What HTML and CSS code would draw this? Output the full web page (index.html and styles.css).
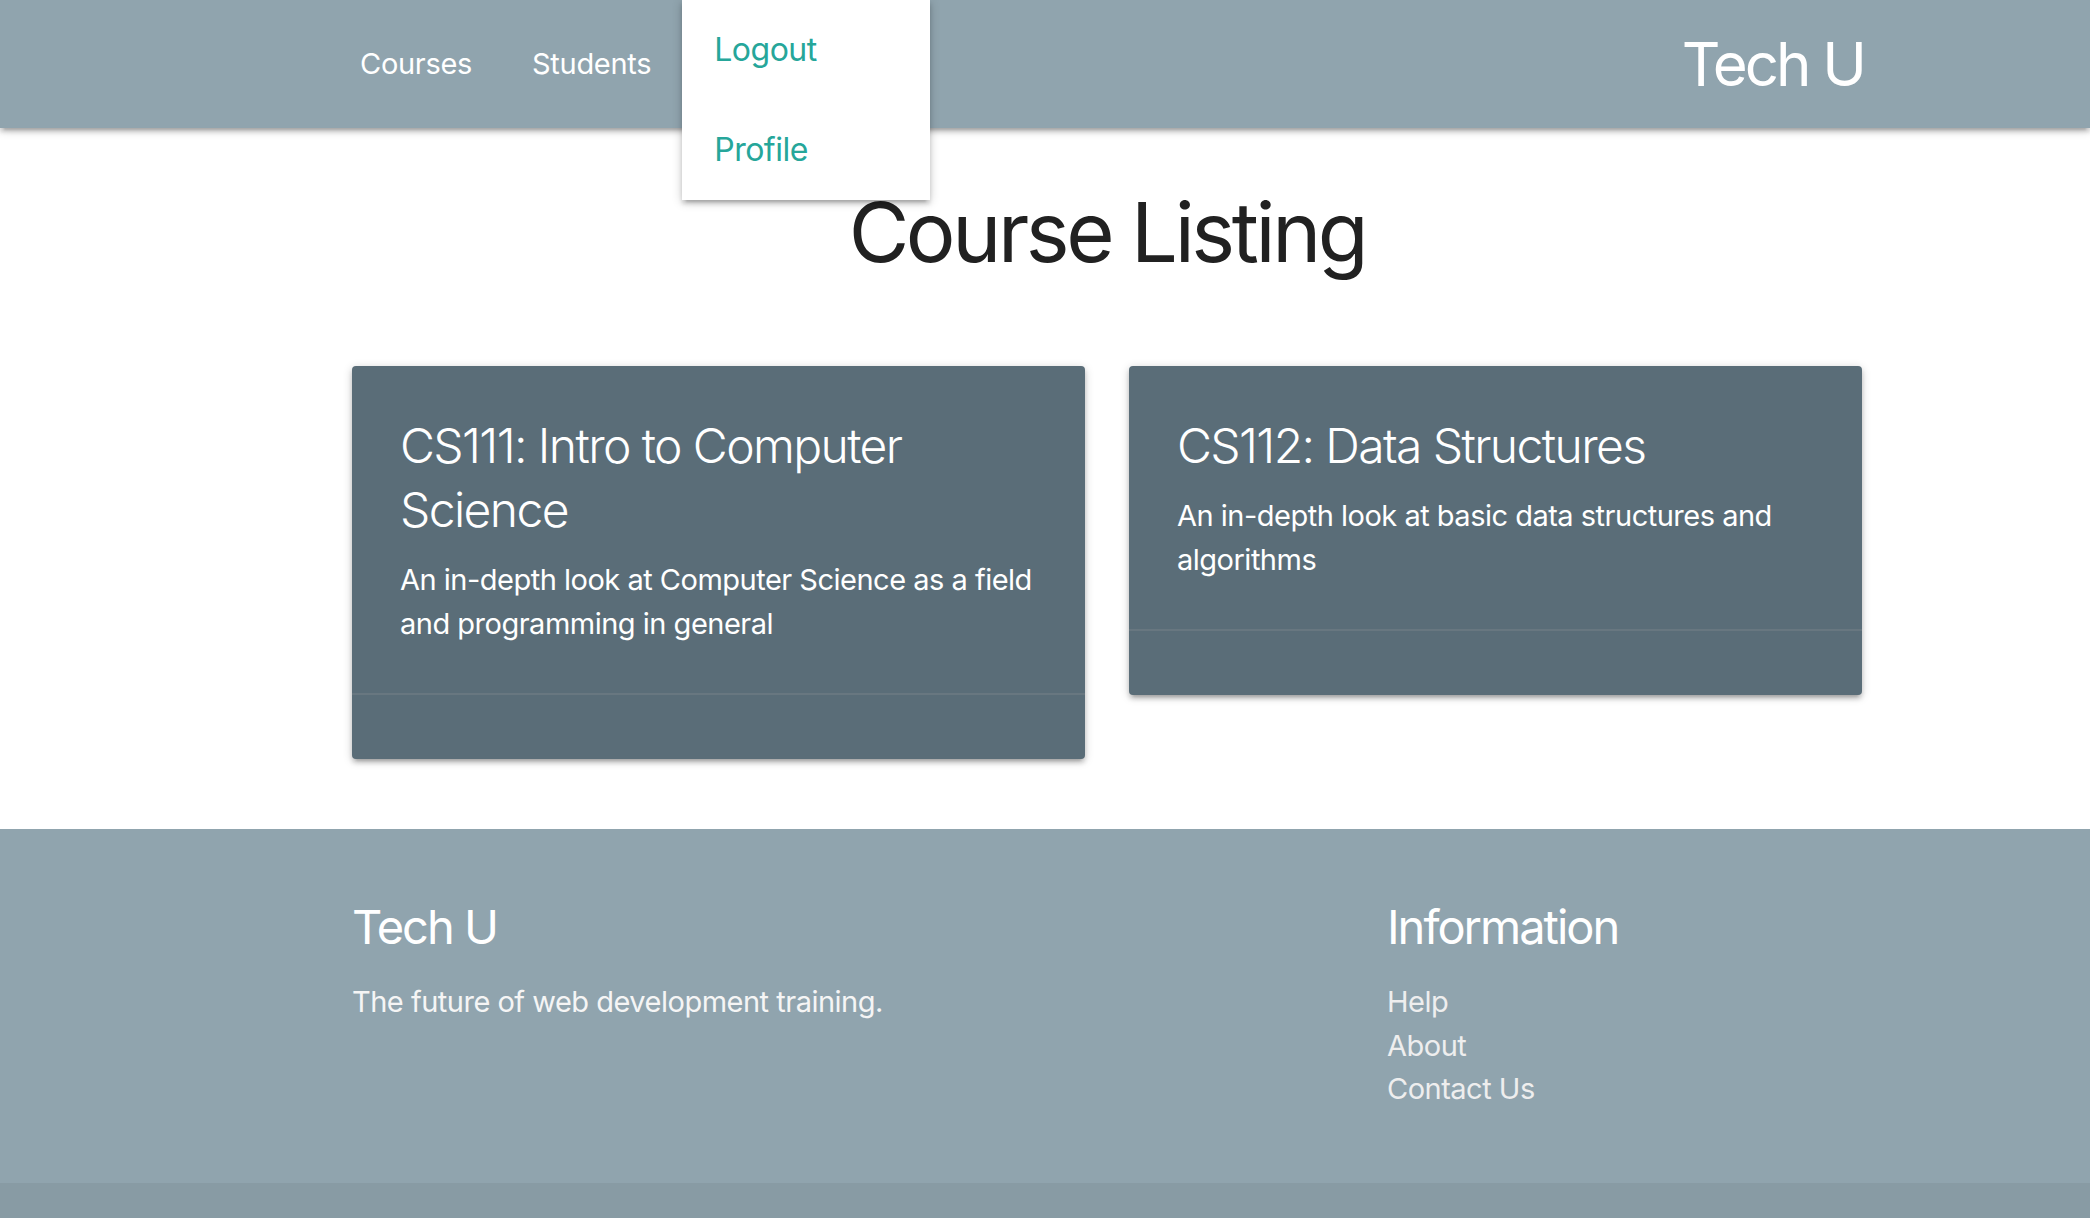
FILE: index.html
```html
<!DOCTYPE html>
<html lang="en">
<head>
<meta charset="utf-8">
<title>Tech U - Course Listing</title>
<link rel="stylesheet" href="styles.css">
</head>
<body>
<nav class="nav">
  <div class="nav-inner">
    <ul class="nav-links">
      <li><a href="#">Courses</a></li>
      <li><a href="#">Students</a></li>
      <li class="account">
        <a href="#" class="account-trigger">Account</a>
        <ul class="dropdown">
          <li><a href="#">Logout</a></li>
          <li><a href="#">Profile</a></li>
        </ul>
      </li>
    </ul>
    <a href="#" class="brand">Tech U</a>
  </div>
</nav>

<main class="container">
  <h3 class="page-title">Course Listing</h3>
  <div class="cards">
    <div class="card">
      <div class="card-content">
        <span class="card-title">CS111: Intro to Computer Science</span>
        <p>An in-depth look at Computer Science as a field and programming in general</p>
      </div>
      <div class="card-action"></div>
    </div>
    <div class="card">
      <div class="card-content">
        <span class="card-title">CS112: Data Structures</span>
        <p>An in-depth look at basic data structures and algorithms</p>
      </div>
      <div class="card-action"></div>
    </div>
  </div>
</main>

<footer class="footer">
  <div class="container footer-grid">
    <div class="footer-col">
      <h5 class="footer-title">Tech U</h5>
      <p class="footer-text">The future of web development training.</p>
    </div>
    <div class="footer-col">
      <h5 class="footer-title">Information</h5>
      <ul class="footer-links">
        <li><a href="#">Help</a></li>
        <li><a href="#">About</a></li>
        <li><a href="#">Contact Us</a></li>
      </ul>
    </div>
  </div>
  <div class="footer-copyright"></div>
</footer>
</body>
</html>
```

FILE: styles.css
```css
* { box-sizing: border-box; }

html, body {
  margin: 0;
  padding: 0;
}

body {
  font-family: Inter, "Liberation Sans", sans-serif;
  font-size: 29px;
  line-height: 1.5;
  letter-spacing: -0.5px;
  color: rgba(0, 0, 0, 0.87);
  background: #ffffff;
  overflow: hidden;
}

a { text-decoration: none; }

ul { list-style: none; margin: 0; padding: 0; }

/* NAV */
.nav {
  position: relative;
  z-index: 5;
  height: 128px;
  background: #90a4ae;
  box-shadow: 0 4px 4px 0 rgba(0,0,0,0.14), 0 6px 2px -4px rgba(0,0,0,0.12), 0 2px 10px 0 rgba(0,0,0,0.2);
}

.nav-inner {
  height: 128px;
  display: flex;
  align-items: center;
  justify-content: space-between;
  padding: 0 226px 0 330px;
}

.nav-links {
  display: flex;
  height: 128px;
}

.nav-links > li {
  display: flex;
  align-items: center;
  height: 128px;
}

.nav-links > li > a {
  display: block;
  padding: 0 30px;
  color: #ffffff;
  font-size: 29px;
  line-height: 128px;
  letter-spacing: -0.3px;
}

.account {
  position: relative;
  width: 248px;
  margin-left: 1px;
}

.account-trigger { visibility: hidden; }

.dropdown {
  position: absolute;
  top: 0;
  left: 0;
  width: 248px;
  background: #ffffff;
  z-index: 10;
  box-shadow: 0 4px 4px 0 rgba(0,0,0,0.14), 0 6px 2px -4px rgba(0,0,0,0.12), 0 2px 10px 0 rgba(0,0,0,0.2);
}

.dropdown li a {
  display: block;
  height: 100px;
  padding: 0 32px;
  line-height: 100px;
  font-size: 32px;
  color: #26a69a;
}

.brand {
  color: #ffffff;
  font-size: 60px;
  line-height: 128px;
  letter-spacing: -3px;
}

/* MAIN */
.container {
  margin-left: 352px;
  width: 1510px;
}

.page-title {
  margin: 57px 0 87px;
  font-size: 83px;
  font-weight: 400;
  line-height: 94px;
  text-align: center;
  color: #212121;
  letter-spacing: -3.4px;
}

.cards {
  display: flex;
  align-items: flex-start;
  gap: 44px;
  margin-bottom: 70px;
}

.card {
  width: 733px;
  background: #5a6d78;
  border-radius: 4px;
  color: #ffffff;
  box-shadow: 0 4px 4px 0 rgba(0,0,0,0.14), 0 6px 2px -4px rgba(0,0,0,0.12), 0 2px 10px 0 rgba(0,0,0,0.2);
}

.card-content {
  padding: 48px;
}

.card-title {
  display: block;
  font-size: 48px;
  font-weight: 300;
  line-height: 64px;
  margin-bottom: 16px;
  letter-spacing: -1.6px;
}

.card-content p {
  margin: 0;
  font-size: 29px;
  line-height: 43.5px;
}

.card-action {
  height: 66px;
  border-top: 2px solid rgba(160,160,160,0.2);
}

/* FOOTER */
.footer {
  background: #90a4ae;
  padding-top: 42px;
}

.footer-grid {
  display: grid;
  grid-template-columns: 1035px 1fr;
  height: 312px;
}

.footer-title {
  margin: 30px 0 27px;
  font-size: 47px;
  font-weight: 400;
  line-height: 52px;
  color: #ffffff;
  letter-spacing: -2px;
}

.footer-text {
  margin: 0;
  line-height: 43.5px;
  color: #f5f5f5;
}

.footer-links li a {
  display: block;
  line-height: 43.5px;
  color: #eeeeee;
}

.footer-copyright {
  height: 100px;
  background: rgba(51, 51, 51, 0.08);
}
```
